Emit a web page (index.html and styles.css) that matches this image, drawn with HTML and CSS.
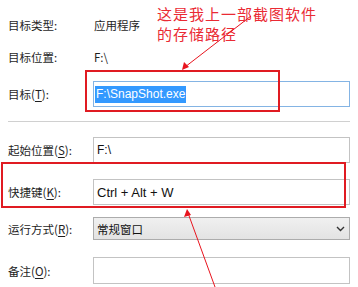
FILE: index.html
```
<!DOCTYPE html>
<html lang="zh-CN">
<head>
    <meta charset="UTF-8">
    <title>属性 - 快捷方式</title>
    <link rel="stylesheet" href="styles.css">
</head>
<body>
    <div class="props">
        <div class="row info first">
            <span class="label">目标类型:</span>
            <span class="value">应用程序</span>
        </div>
        <div class="row info second">
            <span class="label">目标位置:</span>
            <span class="value">F:\</span>
        </div>
        <div class="row field target-row">
            <span class="label">目标(<u>T</u>):</span>
            <div class="box target"><span class="sel">F:\SnapShot.exe</span></div>
        </div>

        <div class="sep"></div>

        <div class="row field start-row">
            <span class="label">起始位置(<u>S</u>):</span>
            <div class="box">F:\</div>
        </div>
        <div class="row field key-row">
            <span class="label">快捷键(<u>K</u>):</span>
            <div class="box keys">Ctrl + Alt + W</div>
        </div>
        <div class="row field run-row">
            <span class="label">运行方式(<u>R</u>):</span>
            <div class="box select">
                <span>常规窗口</span>
                <svg class="chev" width="9" height="6" viewBox="0 0 9 6"><path d="M1 1 L4.5 4.5 L8 1" fill="none" stroke="#333" stroke-width="1.4"/></svg>
            </div>
        </div>
        <div class="row field note-row">
            <span class="label">备注(<u>O</u>):</span>
            <div class="box"></div>
        </div>
    </div>

    <!-- annotations drawn over the dialog -->
    <div class="note-text">这是我上一部截图软件<br>的存储路径</div>
    <div class="mark mark-target"></div>
    <div class="mark mark-key"></div>
    <svg class="arrows" width="358" height="287" viewBox="0 0 358 287">
        <line x1="251" y1="16" x2="185" y2="67" stroke="#e8141e" stroke-width="1"/>
        <polygon points="182,70 184,62 189,67" fill="#e8141e"/>
        <line x1="215" y1="287" x2="188" y2="213" stroke="#e8141e" stroke-width="1"/>
        <polygon points="187,209 184,217 191,215" fill="#e8141e"/>
    </svg>
</body>
</html>
```

FILE: styles.css
```
html, body {
    margin: 0;
    padding: 0;
    background: #fff;
}

body {
    position: relative;
    width: 358px;
    height: 287px;
    overflow: hidden;
    font-family: "Noto Sans CJK SC", "Noto Sans", sans-serif;
    font-size: 11.5px;
    color: #1e1e1e;
}

.props {
    padding: 15px 0 0 8px;
}

.row {
    display: flex;
    align-items: center;
}

.label {
    width: 85px;
    flex: none;
}

.label u {
    text-decoration-thickness: 1px;
    text-underline-offset: 2px;
}

.info {
    height: 20px;
}

.second {
    margin-top: 12px;
}

.value {
    padding-left: 1px;
}

.field .box {
    width: 257px;
    box-sizing: border-box;
    border: 1px solid #c3c3c3;
    background: #fff;
    padding-left: 3px;
    display: flex;
    align-items: center;
    font-family: "Liberation Sans", sans-serif;
    font-size: 12px;
    color: #111;
}

.target-row {
    margin-top: 14px;
}

.target-row .box {
    height: 26px;
    border-color: #84b4e4;
    padding-left: 1px;
}

.sel {
    background: #3399ff;
    color: #fff;
    line-height: 17px;
    padding: 0 1px;
    font-size: 12px;
}

.sep {
    margin: 14px 0 0 0;
    width: 342px;
    height: 1px;
    background: #d0d0d0;
}

.start-row {
    margin-top: 15px;
}

.start-row .box {
    height: 26px;
}

.key-row {
    margin-top: 16px;
}

.key-row .box {
    height: 26px;
    font-size: 13px;
}

.run-row {
    margin-top: 12px;
}

.select.box {
    height: 23px;
    border-color: #acacac;
    background: linear-gradient(#f0f0f0, #e3e3e3);
    justify-content: space-between;
    font-family: "Noto Sans CJK SC", sans-serif;
    font-size: 11.5px;
    padding-right: 4px;
}

.note-row {
    margin-top: 17px;
}

.note-row .box {
    height: 27px;
}

.note-text {
    position: absolute;
    left: 157px;
    top: 4px;
    font-size: 15px;
    line-height: 20px;
    letter-spacing: 1px;
    color: #ea2a34;
}

.mark {
    position: absolute;
    border: 2px solid #e01b22;
    box-sizing: border-box;
}

.mark-target {
    left: 85px;
    top: 70px;
    width: 195px;
    height: 42px;
}

.mark-key {
    left: 1px;
    top: 162px;
    width: 345px;
    height: 46px;
}

.arrows {
    position: absolute;
    left: 0;
    top: 0;
}
```
